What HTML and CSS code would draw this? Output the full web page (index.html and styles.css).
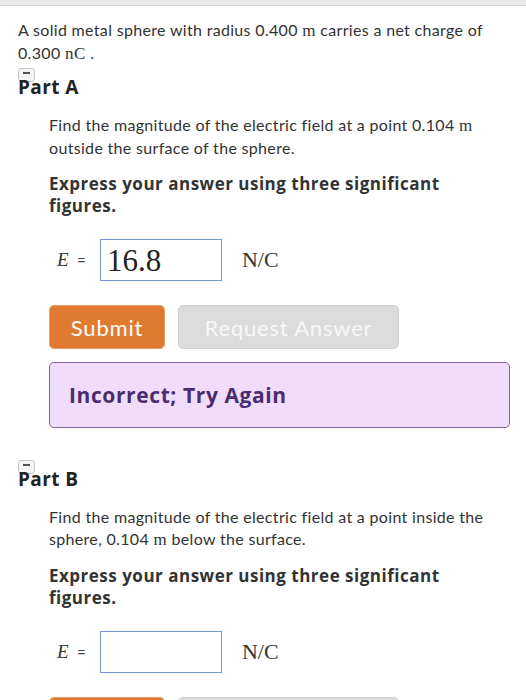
FILE: index.html
```html
<!DOCTYPE html>
<html>
<head>
<meta charset="utf-8">
<link rel="stylesheet" href="styles.css">
</head>
<body>
<div class="topbar"></div>
<div class="page">
  <p class="intro">A solid metal sphere with radius 0.400 <span class="math">m</span> carries a net charge of 0.300 <span class="math">nC</span> .</p>

  <section class="part part-a">
    <h2 class="part-head"><span class="toggle"><span class="minus"></span></span>Part A</h2>
    <div class="part-body">
      <p class="question">Find the magnitude of the electric field at a point 0.104 <span class="math">m</span> outside the surface of the sphere.</p>
      <p class="instr">Express your answer using three significant figures.</p>
      <div class="answer-row">
        <span class="var"><i>E</i></span><span class="eq">=</span>
        <div class="input"><span class="val">16.8</span></div>
        <span class="unit">N/C</span>
      </div>
      <div class="buttons">
        <button class="btn submit">Submit</button>
        <button class="btn request">Request Answer</button>
      </div>
      <div class="feedback">Incorrect; Try Again</div>
    </div>
  </section>

  <section class="part part-b">
    <h2 class="part-head"><span class="toggle"><span class="minus"></span></span>Part B</h2>
    <div class="part-body">
      <p class="question">Find the magnitude of the electric field at a point inside the sphere, 0.104 <span class="math">m</span> below the surface.</p>
      <p class="instr">Express your answer using three significant figures.</p>
      <div class="answer-row">
        <span class="var"><i>E</i></span><span class="eq">=</span>
        <div class="input"><span class="val"></span></div>
        <span class="unit">N/C</span>
      </div>
      <div class="buttons">
        <button class="btn submit">Submit</button>
        <button class="btn request">Request Answer</button>
      </div>
    </div>
  </section>
</div>
</body>
</html>
```

FILE: styles.css
```css
html, body {
  margin: 0;
  padding: 0;
  background: #ffffff;
}
body {
  font-family: "Lato", "Open Sans", sans-serif;
  color: #333333;
  font-size: 16px;
  line-height: 22px;
  letter-spacing: 0.32px;
  font-variant-ligatures: none;
  overflow: hidden;
}
.topbar {
  height: 5px;
  background: #e9e9e9;
  border-bottom: 1px solid #d6d6d6;
}
.page {
  padding: 0 16px 0 18px;
}
p {
  margin: 0;
}
.intro {
  margin-top: 13px;
}
.math {
  font-family: "Liberation Serif", "DejaVu Serif", serif;
  font-size: 17px;
  letter-spacing: 0.5px;
}
.part-head {
  position: relative;
  z-index: 0;
  margin: 11px 0 0;
  font-family: "Open Sans", "Lato", sans-serif;
  font-size: 19px;
  line-height: 22px;
  font-weight: 700;
  letter-spacing: 0.4px;
  color: #222222;
}
.part-b .part-head {
  margin-top: 40px;
}
.toggle {
  position: absolute;
  left: 0;
  top: -8px;
  width: 15px;
  height: 12px;
  border: 1px solid #c4c4c4;
  border-radius: 3px;
  background: #f4f4f4;
  z-index: -1;
}
.minus {
  position: absolute;
  left: 4px;
  top: 3px;
  width: 7px;
  height: 2px;
  background: #555555;
}
.part-body {
  padding-left: 31px;
}
.question {
  margin-top: 16px;
}
.instr {
  margin-top: 14px;
  font-family: "Open Sans", "Lato", sans-serif;
  font-size: 17px;
  line-height: 22px;
  font-weight: 700;
  letter-spacing: 0.5px;
  color: #333333;
}
.answer-row {
  margin-top: 22px;
  display: flex;
  align-items: center;
  height: 42px;
}
.var {
  font-family: "Liberation Serif", "DejaVu Serif", serif;
  font-size: 19px;
  margin-left: 8px;
  color: #333;
}
.eq {
  margin-left: 8px;
  font-size: 15px;
  color: #444;
}
.input {
  margin-left: 14px;
  width: 120px;
  height: 40px;
  border: 1px solid #7496d2;
  display: flex;
  align-items: center;
}
.val {
  font-family: "Liberation Serif", "DejaVu Serif", serif;
  font-size: 31px;
  letter-spacing: 0;
  color: #222;
  padding-left: 6px;
  padding-top: 2px;
}
.unit {
  margin-left: 20px;
  font-family: "Liberation Serif", "DejaVu Serif", serif;
  font-size: 22px;
  letter-spacing: 0;
  color: #333;
}
.buttons {
  margin-top: 24px;
  display: flex;
  gap: 13px;
}
.btn {
  height: 44px;
  border-radius: 5px;
  font-family: "Lato", "Open Sans", sans-serif;
  font-size: 22px;
  letter-spacing: 0.8px;
  padding: 0;
  cursor: pointer;
}
.submit {
  width: 116px;
  background: #e07a31;
  border: 1px solid #e8a067;
  color: #ffffff;
}
.request {
  width: 221px;
  background: #dcdcdc;
  border: 1px solid #cfcfcf;
  color: #f6f6f6;
}
.feedback {
  margin-top: 13px;
  border: 1.5px solid #85629c;
  border-radius: 5px;
  background: #f0dcfb;
  padding: 20px 19px;
  font-family: "Open Sans", "Lato", sans-serif;
  font-size: 21px;
  line-height: 24px;
  font-weight: 700;
  letter-spacing: 0.6px;
  color: #4b2c6d;
}
```
